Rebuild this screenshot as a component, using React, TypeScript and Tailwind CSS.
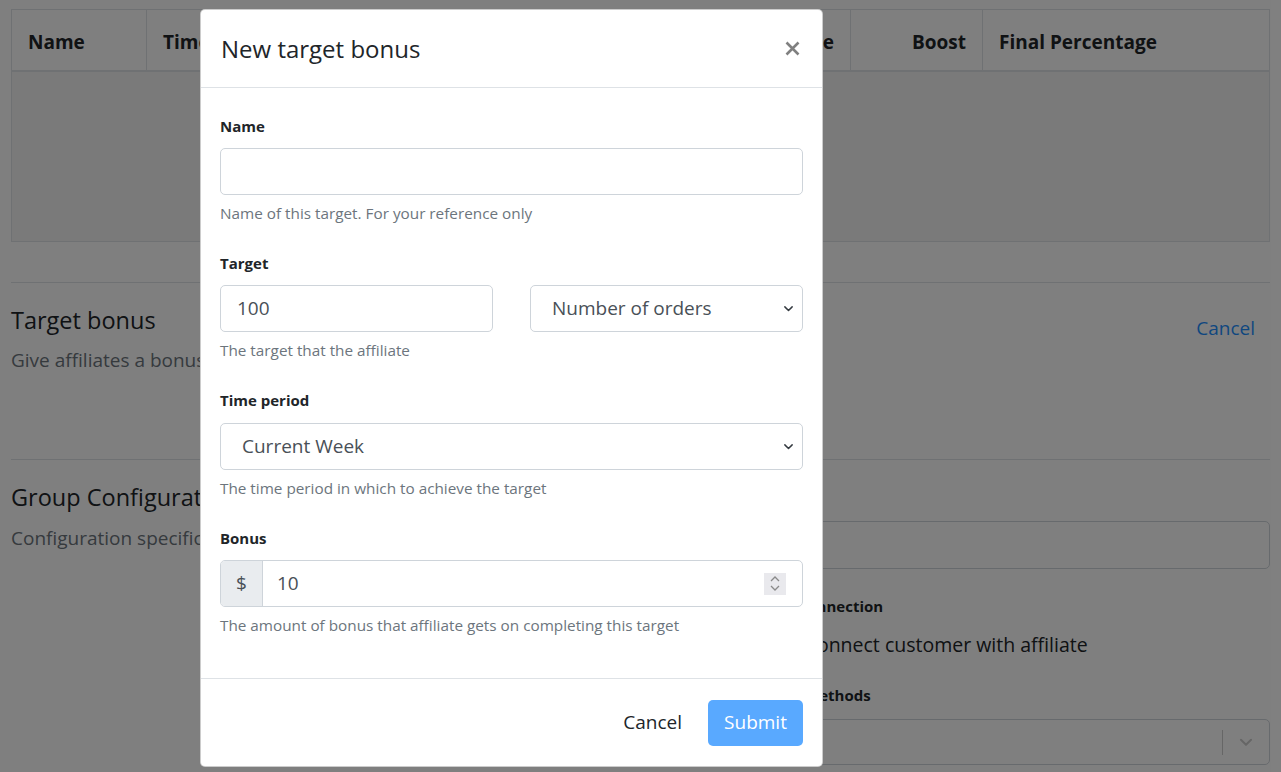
import { ReactNode } from 'react';

const font = "font-['Open_Sans','Noto_Sans',sans-serif]";

function Chevron({ className }: { className?: string }) {
    return (
        <svg className={className} viewBox="0 0 16 16" fill="none" stroke="currentColor" strokeWidth={1.8} strokeLinecap="round" strokeLinejoin="round">
            <path d="M3.5 6l4.5 4.5L12.5 6" />
        </svg>
    );
}

function Help({ children }: { children: ReactNode }) {
    return <div className="mt-[7px] text-[15.3px] leading-[22px] text-[#6c757d]">{children}</div>;
}

function Field({ label, help, gap = 'mb-[11px]', children }: { label: string; help?: string; gap?: string; children: ReactNode }) {
    return (
        <div className="mb-7">
            <div className={`text-[15px] leading-[22px] font-bold text-[#212529] ${gap}`}>{label}</div>
            {children}
            {help && <Help>{help}</Help>}
        </div>
    );
}

function SelectBox({ value }: { value: string }) {
    return (
        <div className="h-[47px] flex items-center justify-between rounded-[5px] border border-[#ced4da] bg-white pl-[21px] pr-[7px]">
            <span className="text-[19px] text-[#495057]">{value}</span>
            <Chevron className="w-[13px] h-[13px] text-[#343a40]" />
        </div>
    );
}

export default function App() {
    const headers = [
        { label: 'Name', w: 'w-[135px]', right: false },
        { label: 'Time period', w: 'w-[190px]', right: false },
        { label: 'Target', w: 'w-[170px]', right: false },
        { label: 'Bonus', w: 'w-[160px]', right: true },
        { label: 'Percentage', w: 'w-[184px]', right: true },
        { label: 'Boost', w: 'w-[132px]', right: true },
        { label: 'Final Percentage', w: 'flex-1', right: false },
    ];

    return (
        <div className={`relative min-h-[772px] overflow-hidden bg-white text-[#212529] ${font}`}>
            {/* Page behind the modal */}
            <div className="px-[11px] pt-[9px]">
                <div className="border border-[#dee2e6]">
                    <div className="flex border-b-2 border-[#dee2e6] h-[62px]">
                        {headers.map((h) => (
                            <div
                                key={h.label}
                                className={`${h.w} shrink-0 border-r border-[#dee2e6] last:border-r-0 px-[16px] pt-[4px] flex items-center text-[19px] font-bold text-[#212529] ${h.right ? 'justify-end' : 'justify-start'}`}
                            >
                                {h.label}
                            </div>
                        ))}
                    </div>
                    <div className="h-[169px] bg-[#f4f4f4]"></div>
                </div>

                <div className="mt-[40px] border-t border-[#dee2e6] pt-[19px] pb-[85px] flex justify-between">
                    <div>
                        <div className="text-[23.5px] leading-[36px] text-[#212529]">Target bonus</div>
                        <div className="mt-[8px] text-[19px] leading-[28px] text-[#6c757d]">
                            Give affiliates a bonus when they reach a target
                        </div>
                    </div>
                    <div className="pt-[12px] pr-[15px] text-[19px] text-[#1f8fff]">Cancel</div>
                </div>

                <div className="border-t border-[#dee2e6] pt-[19px] grid grid-cols-[631px_1fr]">
                    <div>
                        <div className="text-[23.5px] leading-[36px] text-[#212529]">Group Configuration</div>
                        <div className="mt-[9px] text-[19px] leading-[28px] text-[#6c757d]">
                            Configuration specific to this group
                        </div>
                    </div>
                    <div className="pt-[42px]">
                        <div className="h-[48px] rounded-[5px] border border-[#ced4da]"></div>
                        <div className="mt-[27px] text-[15px] leading-[21px] font-bold">Automatic customer connection</div>
                        <div className="mt-[14px] flex items-center gap-[21px] text-[19.5px] leading-[28px]">
                            <span className="w-[16px] h-[16px] rounded-[3px] border border-[#adb5bd]"></span>
                            Automatically connect customer with affiliate
                        </div>
                        <div className="mt-[26px] text-[15px] leading-[21px] font-bold">Available withdrawal methods</div>
                        <div className="mt-[13px] h-[46px] rounded-[5px] border border-[#ced4da] flex items-center justify-end">
                            <span className="h-[25px] w-px bg-[#ccc]"></span>
                            <Chevron className="mx-[14px] w-[18px] h-[18px] text-[#ccc]" />
                        </div>
                    </div>
                </div>
            </div>

            {/* Backdrop */}
            <div className="absolute inset-0 bg-black/50"></div>

            {/* Modal */}
            <div className="absolute left-[200px] top-[9px] w-[623px] rounded-[5px] bg-white border border-black/20">
                <div className="flex items-center justify-between h-[78px] px-[20px] border-b border-[#dee2e6]">
                    <div className="text-[24px] leading-[36px] text-[#212529]">New target bonus</div>
                    <svg className="w-[15px] h-[15px] mr-[2px] text-[#808080]" viewBox="0 0 15 15" fill="none" stroke="currentColor" strokeWidth={2.6}>
                        <path d="M1.5 1.5l12 12M13.5 1.5l-12 12" />
                    </svg>
                </div>

                <div className="px-[19px] pt-[27px] pb-[14px]">
                    <Field label="Name" help="Name of this target. For your reference only">
                        <div className="h-[47px] rounded-[5px] border border-[#ced4da]"></div>
                    </Field>

                    <Field label="Target">
                        <div className="grid grid-cols-2 gap-[37px]">
                            <div className="h-[47px] flex items-center rounded-[5px] border border-[#ced4da] pl-[16px] text-[19px] text-[#495057]">
                                100
                            </div>
                            <SelectBox value="Number of orders" />
                        </div>
                        <Help>The target that the affiliate</Help>
                    </Field>

                    <Field label="Time period" gap="mb-[12px]" help="The time period in which to achieve the target">
                        <SelectBox value="Current Week" />
                    </Field>

                    <Field label="Bonus" help="The amount of bonus that affiliate gets on completing this target">
                        <div className="h-[47px] flex rounded-[5px] border border-[#ced4da] overflow-hidden">
                            <div className="w-[42px] flex items-center justify-center bg-[#e9ecef] border-r border-[#ced4da] text-[19px] text-[#495057]">
                                $
                            </div>
                            <div className="flex-1 flex items-center justify-between pl-[14px] pr-[16px] text-[19px] text-[#495057]">
                                10
                                <div className="w-[22px] h-[22px] bg-[#e9e9ed] flex flex-col items-center justify-center text-[#8a8a8a]">
                                    <svg className="w-[10px] h-[6px]" viewBox="0 0 10 6" fill="none" stroke="currentColor" strokeWidth={1.3}>
                                        <path d="M1 5l4-4 4 4" />
                                    </svg>
                                    <svg className="mt-[3px] w-[10px] h-[6px]" viewBox="0 0 10 6" fill="none" stroke="currentColor" strokeWidth={1.3}>
                                        <path d="M1 1l4 4 4-4" />
                                    </svg>
                                </div>
                            </div>
                        </div>
                    </Field>
                </div>

                <div className="h-[88px] border-t border-[#dee2e6] flex items-center justify-end gap-[26px] px-[19px]">
                    <span className="text-[19px] text-[#212529]">Cancel</span>
                    <div className="h-[46px] w-[95px] rounded-[5px] bg-[#59a9ff] flex items-center justify-center text-[19px] text-white">
                        Submit
                    </div>
                </div>
            </div>
        </div>
    );
}
